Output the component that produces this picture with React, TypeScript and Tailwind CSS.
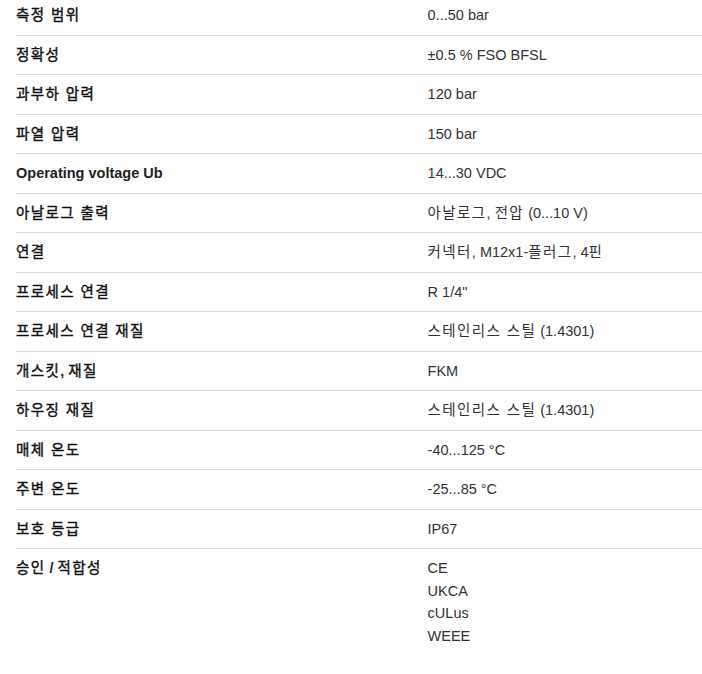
const specs: { label: string; value: string[] }[] = [
	{ label: "측정 범위", value: ["0...50 bar"] },
	{ label: "정확성", value: ["±0.5 % FSO BFSL"] },
	{ label: "과부하 압력", value: ["120 bar"] },
	{ label: "파열 압력", value: ["150 bar"] },
	{ label: "Operating voltage Ub", value: ["14...30 VDC"] },
	{ label: "아날로그 출력", value: ["아날로그, 전압 (0...10 V)"] },
	{ label: "연결", value: ["커넥터, M12x1-플러그, 4핀"] },
	{ label: "프로세스 연결", value: ['R 1/4"'] },
	{ label: "프로세스 연결 재질", value: ["스테인리스 스틸 (1.4301)"] },
	{ label: "개스킷, 재질", value: ["FKM"] },
	{ label: "하우징 재질", value: ["스테인리스 스틸 (1.4301)"] },
	{ label: "매체 온도", value: ["-40...125 °C"] },
	{ label: "주변 온도", value: ["-25...85 °C"] },
	{ label: "보호 등급", value: ["IP67"] },
	{ label: "승인 / 적합성", value: ["CE", "UKCA", "cULus", "WEEE"] },
];

// hangul runs get a bit of extra spacing so they sit wider like the source font
const Mixed = ({ text, bold }: { text: string; bold?: boolean }) => (
	<>
		{text.split(/([\uAC00-\uD7A3]+(?: [\uAC00-\uD7A3]+)*)/).map((part, i) =>
			/[\uAC00-\uD7A3]/.test(part) ? (
				<span
					key={i}
					className={
						bold
							? "tracking-[1.4px] text-[#111] [-webkit-text-stroke:0.4px_#111]"
							: "tracking-[1.4px]"
					}
				>
					{part}
				</span>
			) : (
				<span key={i} className={bold ? "font-semibold" : ""}>
					{part}
				</span>
			)
		)}
	</>
);

const App = () => {
	return (
		<div
			className="bg-white min-h-screen pl-4 text-[14.5px]"
			style={{ fontFamily: '"Liberation Sans", Arial, "Noto Sans CJK KR", sans-serif' }}
		>
			{specs.map((row, i) => (
				<div
					key={row.label}
					className={
						i === specs.length - 1
							? "flex pt-[9px] pb-[9px]"
							: i === 0
								? "flex border-b border-[#dcdcdc] pt-[5px] pb-[9px]"
								: "flex border-b border-[#dcdcdc] pt-[9px] pb-[9px]"
					}
				>
					<div className="w-[60%] text-[#222] leading-[20.5px]">
						<Mixed text={row.label} bold />
					</div>
					<div className="w-[40%] text-[#333] leading-[22.5px] -my-[1px]">
						{row.value.map((v) => (
							<div key={v}>
								<Mixed text={v} />
							</div>
						))}
					</div>
				</div>
			))}
		</div>
	);
};

export default App;
